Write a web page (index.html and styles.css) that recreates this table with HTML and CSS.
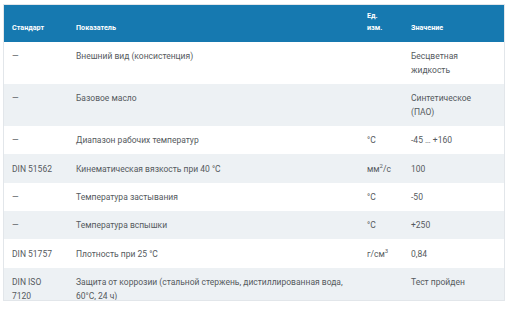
FILE: index.html
```html
<!DOCTYPE html>
<html lang="ru">
<head>
<meta charset="utf-8">
<link rel="stylesheet" href="styles.css">
</head>
<body>
<div class="frame">
  <table class="spec">
    <colgroup>
      <col class="c-std">
      <col class="c-name">
      <col class="c-unit">
      <col class="c-val">
    </colgroup>
    <thead>
      <tr>
        <th>Стандарт</th>
        <th>Показатель</th>
        <th>Ед.<br>изм.</th>
        <th>Значение</th>
      </tr>
    </thead>
    <tbody>
      <tr>
        <td>—</td>
        <td>Внешний вид (консистенция)</td>
        <td></td>
        <td>Бесцветная<br>жидкость</td>
      </tr>
      <tr>
        <td>—</td>
        <td>Базовое масло</td>
        <td></td>
        <td>Синтетическое<br>(ПАО)</td>
      </tr>
      <tr>
        <td>—</td>
        <td>Диапазон рабочих температур</td>
        <td>°C</td>
        <td>-45 … +160</td>
      </tr>
      <tr>
        <td>DIN 51562</td>
        <td>Кинематическая вязкость при 40 °C</td>
        <td>мм<sup>2</sup>/с</td>
        <td>100</td>
      </tr>
      <tr>
        <td>—</td>
        <td>Температура застывания</td>
        <td>°C</td>
        <td>-50</td>
      </tr>
      <tr>
        <td>—</td>
        <td>Температура вспышки</td>
        <td>°C</td>
        <td>+250</td>
      </tr>
      <tr>
        <td>DIN 51757</td>
        <td>Плотность при 25 °C</td>
        <td>г/см<sup>3</sup></td>
        <td>0,84</td>
      </tr>
      <tr>
        <td>DIN ISO<br>7120</td>
        <td>Защита от коррозии (стальной стержень, дистиллированная вода,<br>60°C, 24 ч)</td>
        <td></td>
        <td>Тест пройден</td>
      </tr>
    </tbody>
  </table>
</div>
</body>
</html>
```

FILE: styles.css
```css
html, body {
  margin: 0;
  padding: 0;
  background: #ffffff;
}

body {
  padding: 4px 0 0 3px;
  font-family: Roboto, "Liberation Sans", Arial, sans-serif;
}

.frame {
  width: 500px;
  height: 295px;
  border: 1px solid #e2e6ea;
  overflow: hidden;
}

.spec {
  width: 500px;
  border-collapse: collapse;
  table-layout: fixed;
}

.c-std { width: 64px; }
.c-name { width: 291px; }
.c-unit { width: 44px; }
.c-val { width: 101px; }

.spec thead tr {
  background: #1679b0;
}

.spec th {
  height: 37px;
  box-sizing: border-box;
  padding: 0 0 8px 8px;
  vertical-align: bottom;
  text-align: left;
  color: #ffffff;
  font-size: 7.2px;
  font-weight: 700;
  line-height: 12px;
}

.spec td {
  padding: 8.4px 0 6.4px 8px;
  vertical-align: top;
  text-align: left;
  color: #555a5e;
  font-size: 8.5px;
  line-height: 13.6px;
}

.spec tbody tr:nth-child(even) {
  background: #edf1f4;
}

.spec sup {
  font-size: 6px;
  line-height: 0;
}
```
